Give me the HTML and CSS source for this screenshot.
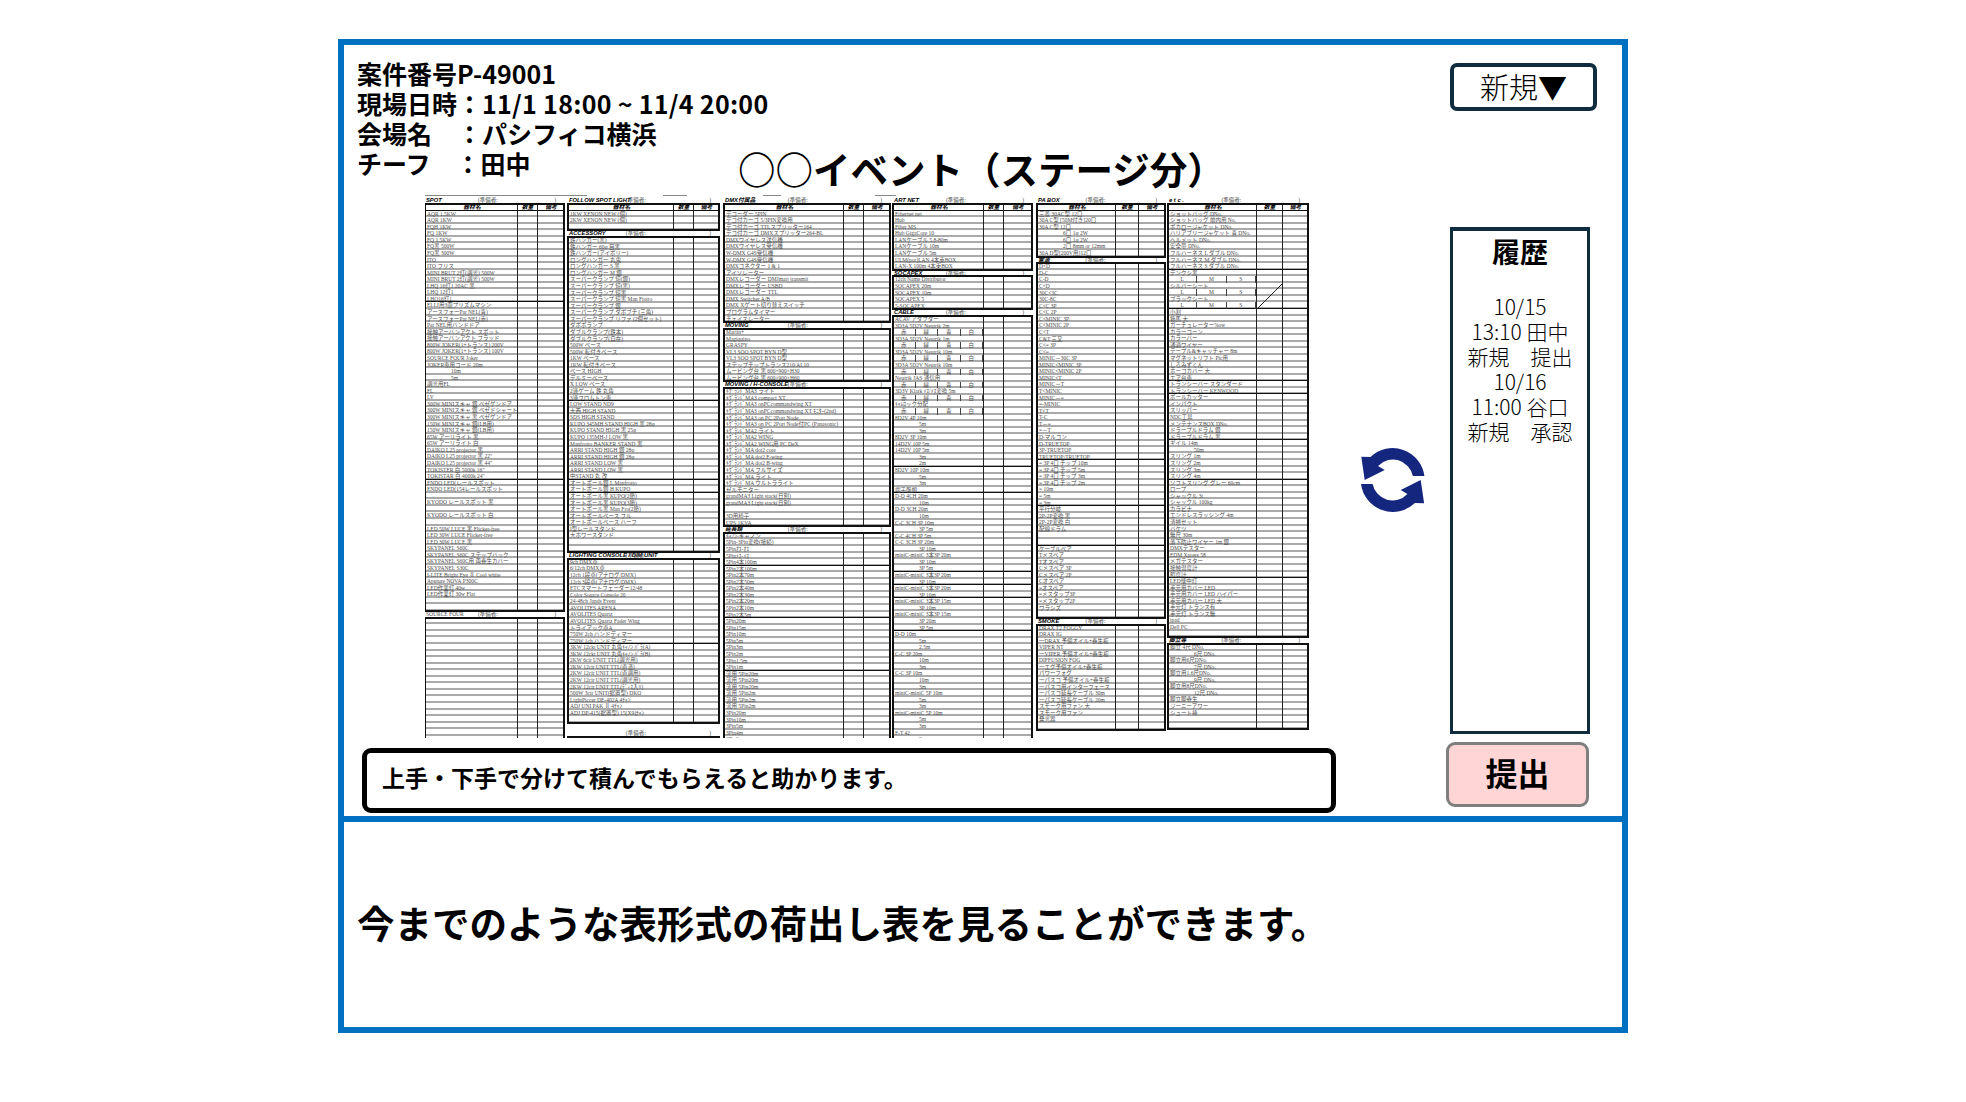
FILE: index.html
```html
<!DOCTYPE html>
<html lang="ja">
<head>
    <meta charset="UTF-8">
    <title>荷出し表</title>
    <link rel="stylesheet" href="styles.css">
</head>
<body>
    <div class="frame">
        <section class="upper">
            <div class="main">
                <div class="head">
                    <div class="info">
                        <div>案件番号P-49001</div>
                        <div>現場日時：<span class="num">11/1 18:00 ~ 11/4 20:00</span></div>
                        <div>会場名　：パシフィコ横浜</div>
                        <div>チーフ　：田中</div>
                    </div>
                    <h1 class="title">○○イベント（ステージ分）</h1>
                </div>
                <div class="sheet-rules"><i></i><i></i><i></i><i></i></div>
                <div class="sheet" id="sheet"></div>
                <div class="note">上手・下手で分けて積んでもらえると助かります。</div>
            </div>
            <div class="side">
                <button class="new-btn">新規▼</button>
                <div class="history-row">
                    <div class="sync">
                        <svg width="64" height="65" viewBox="0 0 64 65">
                            <g fill="#15267f">
                                <path d="M63.4 28A32 32 0 0 0 9.5 9L.3 8.7 3.7 32 23.7 22 17 18A20.3 20.3 0 0 1 51.8 28Z"/>
                                <path d="M63.4 28A32 32 0 0 0 9.5 9L.3 8.7 3.7 32 23.7 22 17 18A20.3 20.3 0 0 1 51.8 28Z" transform="rotate(180 31.7 32)"/>
                            </g>
                        </svg>
                    </div>
                    <div class="history">
                        <h2>履歴</h2>
                        <p>10/15<br>13:10 田中<br>新規　提出<br>10/16<br>11:00 谷口<br>新規　承認</p>
                    </div>
                </div>
                <button class="submit-btn">提出</button>
            </div>
        </section>
        <section class="lower">今までのような表形式の荷出し表を見ることができます。</section>
    </div>
    <script src="sheet.js"></script>
</body>
</html>
```

FILE: styles.css
```css
body {
    margin: 0;
    padding: 39px 338px 0;
    background-color: #fff;
    color: #000;
    font-family: "Noto Sans CJK JP", "Noto Sans", sans-serif;
}
.frame {
    width: 1290px;
    height: 994px;
    box-sizing: border-box;
    border: 6px solid #0070c0;
}
.upper {
    display: flex;
    height: 771px;
    border-bottom: 6px solid #0070c0;
}
.main {
    width: 992px;
    padding-top: 13px;
    box-sizing: border-box;
}
.head {
    display: flex;
    height: 120px;
    padding-left: 13px;
}
.info {
    width: 381px;
    font-size: 25px;
    font-weight: 700;
    line-height: 30px;
    white-space: nowrap;
}
.num {
    letter-spacing: .3px;
}
.title {
    margin: 0 0 -10px;
    align-self: flex-end;
    font-size: 37.5px;
    font-weight: 700;
    line-height: 40px;
    white-space: nowrap;
}
.sheet-rules {
    display: flex;
    height: 1px;
    margin: 17px 0 0 81px;
}
.sheet-rules i {
    height: 1px;
    background-color: #888;
    margin-right: 76px;
    width: 162px;
}
.sheet-rules i:nth-child(2) { width: 24px; }
.sheet-rules i:nth-child(3) { width: 18px; margin-right: 94px; }
.sheet-rules i:nth-child(4) { width: 21px; }
.sheet {
    display: flex;
    height: 541px;
    margin: 1px 0 0 81px;
    overflow: hidden;
}
.note {
    height: 65px;
    margin: 10px 0 0 18px;
    padding-left: 15px;
    box-sizing: border-box;
    border: 5px solid #000;
    border-radius: 9px;
    font-size: 23px;
    font-weight: 700;
    line-height: 48px;
    white-space: nowrap;
}
.side {
    flex: 1;
    padding-top: 18px;
}
.new-btn {
    display: block;
    width: 147px;
    height: 48px;
    margin-left: 114px;
    padding: 0 0 6px;
    box-sizing: border-box;
    background-color: #fff;
    border: 4px solid #0f2d3f;
    border-radius: 7px;
    color: #000;
    font-family: inherit;
    font-size: 29px;
    font-weight: 300;
    line-height: 38px;
}
.history-row {
    display: flex;
    margin-top: 116px;
}
.sync {
    display: flex;
    align-items: center;
    width: 114px;
    padding-left: 25px;
    box-sizing: border-box;
}
.history {
    width: 140px;
    height: 507px;
    box-sizing: border-box;
    border: 3px solid #0f2d3f;
    border-top-width: 4px;
    text-align: center;
}
.history h2 {
    margin: 0;
    font-size: 28px;
    font-weight: 700;
    line-height: 40px;
}
.history p {
    margin: 23px 0 0;
    font-size: 21px;
    font-weight: 300;
    line-height: 25px;
}
.submit-btn {
    display: block;
    width: 143px;
    height: 65px;
    margin: 8px 0 0 110px;
    padding: 0 0 5px;
    box-sizing: border-box;
    background-color: #ffd5d5;
    border: 3px solid #7f7f7f;
    border-radius: 9px;
    color: #000;
    font-family: inherit;
    font-size: 32px;
    font-weight: 700;
}
.lower {
    padding: 70px 0 0 13px;
    font-size: 37.5px;
    font-weight: 700;
    line-height: 60px;
    white-space: nowrap;
}

/* sheet */
.col {
    flex: none;
    font-family: "Liberation Serif", "Noto Sans CJK JP", serif;
    font-size: 5.5px;
    color: #4a4a4a;
}
.col-spot { width: 139px; margin-right: 4px; --cols: 92px 20px 27px; }
.col-follow { width: 151px; margin-right: 5px; --cols: 105px 20px 26px; }
.col-dmx { width: 166px; margin-right: 3px; --cols: 119px 20px 27px; }
.col-art { width: 139px; margin-right: 5px; --cols: 90px 20px 29px; }
.col-pa { width: 128px; margin-right: 3px; --cols: 78px 23px 27px; }
.col-etc { width: 140px; --cols: 88px 26px 26px; }
.sec-title {
    display: grid;
    grid-template-columns: 40% 1fr auto;
    height: 6.8px;
    padding: 0 8px 0 1px;
    line-height: 6.8px;
    white-space: nowrap;
}
.sec-title b {
    color: #000;
    font-family: "Liberation Sans", "Noto Sans CJK JP", sans-serif;
    font-size: 5.8px;
    font-style: italic;
}
.sec-title b.plain {
    color: inherit;
    font-family: inherit;
    font-size: inherit;
    font-style: normal;
    font-weight: 400;
}
.block {
    position: relative;
    outline: 2px solid #111;
    outline-offset: -1px;
}
.row {
    display: grid;
    grid-template-columns: var(--cols);
    height: 6.57px;
    line-height: 6px;
    white-space: nowrap;
    background: linear-gradient(#fff 68%, #aaa 68%);
}
.row.heavy {
    background: linear-gradient(#fff 68%, #aaa 68%, #aaa 84%, #111 84%);
}
.row.top {
    height: 6.8px;
    background: #fff;
    color: #000;
    font-family: "Liberation Sans", "Noto Sans CJK JP", sans-serif;
    font-size: 5.8px;
    font-style: italic;
    font-weight: 700;
    text-align: center;
    box-shadow: inset 0 -1px #111;
}
.row span {
    overflow: hidden;
    padding-left: 2px;
}
.row .cell {
    padding: 0;
    border-left: 1px solid #222;
}
.row .indent { padding-left: 26px; }
.row .parts {
    display: grid;
    grid-auto-flow: column;
    grid-auto-columns: 1fr;
    padding: 0;
}
.row .parts em {
    font-style: normal;
    text-align: center;
    border-right: 1px solid #444;
}
.slash {
    position: absolute;
    left: 88px;
    top: 80px;
}
```

FILE: sheet.js
```js
// "_" = heavy line under the row, ">" = indented, "|" = split into small boxes
const COLORS = '赤|緑|青|白';
const SIZES = 'L|M|S';

const sheetData = [
    { cls: 'col-spot', blocks: [
        { title: 'SPOT', top: true, rows: ['AQR 1.5KW', 'AQR 1KW', 'FQH 1KW', 'FQ 1KW', 'FQ 1.5KW', 'FQ黒 500W', 'FQ黒 300W', 'ITO', 'ITO フリス', 'MINI BRUT 2灯(調光) 500W', 'MINI BRUT 2灯(調光) 500W', 'LHQ 16灯1 20AC 黒', 'LHQ 12灯1', '_LHQ16灯1', 'ELLI用3面プリズムマシン', 'アースフォーPar NEL(青)', 'アースフォーPar NEL(赤)', 'Par NEL用バンドドア', '接触アーバンアクト スポット', '接触アーバンアクト フラッド', '800W JOKER(1+トランス) 200V', '800W JOKER(1+トランス) 100V', 'SOURCE FOUR Joker', 'JOKER専用コード 20m', '>10m', '>5m', '調光用FL', 'FL', 'LV', '300W MINIスキャ 銀 ベゼゲンドア', '300W MINIスキャ 銀 ベゼドシャート', '300W MINIスキャ 黒 ベゼゲンドア', '150W MINIスキャ 銀(LB用)', '150W MINIスキャ 銀(LB用)', '65W アーリライト 黒', '65W アーリライト 白', 'DAIKO L25 projector 黒', 'DAIKO L25 projector 黒 22"', 'DAIKO L25 projector 黒 44"', 'TOKISTER 白 5000k 16"', '_TOKISTAR 白 4000k 24"', 'ENDO LED(レールスポット', 'ENDO LED(154レールスポット', '', 'KYODO レールスポット 黒', '', 'KYODO レールスポット 白', '', 'LED 50W LUCE 黒 Flicker-free', 'LED 30W LUCE Flicker-free', 'LED 30W LUCE 黒', 'SKYPANEL S60C', 'SKYPANEL S60C ステップバック', 'SKYPANEL S60C用 雨養生カバー', 'SKYPANEL S30C', 'I-LITE Bright Eye Ⅱ Cool white', 'Aputure NOVA P300C', 'LED作業灯 40w', 'LED作業灯 30w Flat', '', ''] },
        { title: 'SOURCE FOUR', plain: true, rows: Array(20).fill('') }
    ] },
    { cls: 'col-follow', blocks: [
        { title: 'FOLLOW SPOT LIGHT', top: true, rows: ['1KW XENON NEW (個)', '2KW XENON NEW (個)', ''] },
        { title: 'ACCESSORY', rows: ['鉄ハンガー(黒)', '鉄ハンガー 60φ 目黒', '鉄ハンガー(アイボリー)', 'ロングハンガー 丸鬼', 'ロングハンガー S 黒', 'ロングハンガー M 銀', 'スーパークランプ 短(銀)', 'スーパークランプ 短(黒)', 'スーパークランプ 短黒', 'スーパークランプ 短黒 Man Fiotto', 'スーパークランプ 銀', 'スーパークランプ ダボブチ (三角)', 'スーパークランプ リファ (2個セット)', 'ダボポランプ', 'ダブルクランプ(鉄本)', 'ダブルクランプ(自在)', '500W ベース', '500W 転付きベース', '1KW ベース', '1KW 転付きベース', 'ベース HIGH', 'デルミーベース', 'X LOW ベース', '2連ゲーム 鉄 丸角', '_3連フロムトン車', 'LOW STAND ND9', '大西 HIGH STAND', 'SDS HIGH STAND', 'KUPO 345MH STAND HIGH 黒 28φ', 'KUPO STAND HIGH 黒 25φ', 'KUPO 135MH-J LOW 黒', 'Manfrotto BANKER STAND 黒', 'ARRI STAND HIGH 銀 28φ', 'ARRI STAND HIGH 銀 28φ', 'ARRI STAND LOW 黒', 'ARRI STAND LOW 黒', '_中STAND 丸 改', 'オートポール銀 L Manfrotto', '_オートポール銀 H KUPO', 'オートポール黒 KUPO(2節)', 'オートポール黒 KUPO(3節)', 'オートポール黒 Man Fro(2節)', 'オートポールベース フル', 'オートポールベース ハーフ', 'I型レールスタンド', '大ホワースタンド', '', ''] },
        { title: 'LIGHTING CONSOLE / DIM UNIT', rows: ['9ch DMX卓', '6/12ch DMX卓', '12ch 1段卓(アナログ/DMX)', '12ch 3段卓(アナログ/DMX)', 'ETCスマートフェーダー12/48', 'Color Source Console 20', '24-48ch Jands Event', 'AVOLITES ARENA', 'AVOLITES Quartz', 'AVOLITES Quartz Fader Wing', 'トライアック卓A', '750W 2ch ハンドディマー', '_750W 1ch ハンドディマー', '3KW 12ckt UNIT 丸角ｷｬﾉﾝ ﾊﾟﾗ(A)', '3KW 12ckt UNIT 丸角ｷｬﾉﾝ ﾊﾟﾗ(B)', '2KW 6cir UNIT TTL(調光用)', '2KW 12cir UNIT TTL(直潰)', '2KW 12cir UNIT TTL(直調用)', '2KW 12cir UNIT TTL(調光用)', '2KW 12cir UNIT TTL(ﾃﾞｨｽ入ﾘ)', '500W 3cir UNIT(据置型) DKO', 'LightPiccer DE-402A 4ﾁｬﾝ', 'ADJ UNI PAK Ⅱ 4ﾁｬﾝ', 'ADJ DP-415(据置型) 15(X9)ﾁｬﾝ', ''] },
        { gap: true, title: '', rows: ['', ''] }
    ] },
    { cls: 'col-dmx', blocks: [
        { title: 'DMX付属品', top: true, rows: ['デコーダー 5PIN', 'デコ付カーゴ 5/3PIN変換用', 'デコ付カーゴ TTLスプリッター164', 'デコ付カーゴ DMXスプリッター264-BL', 'DMXワイヤレス送信機', 'DMXワイヤレス受信機', 'W-DMX G4S受信機', 'W-DMX G4S受信機', 'DMXコネクター 1 & 1', 'アイソレーター', 'DMXレコーダー DMJmart transmit', 'DMXレコーダー USBD', 'DMXレコーダー TTL', 'DMX Switcher A/B', 'DMX Xゲート切り替えスイッチ', 'プログラムタイマー', 'チェイスレーター'] },
        { title: 'MOVING', rows: ['Martin+', 'Magiquino', 'GRASPY', 'VL3 SOO SPOT BYN D型', 'VL3 SOO SPOT BYN D型', 'ステップチップトランス210/AL10', 'ムービング台 黒 600×900×H30', 'ムービング台 黒 600×900×H60'] },
        { title: 'MOVING / H-CONSOLE', rows: ['ｷｸﾞﾗﾝﾄﾞMA3 ライト', 'ｷｸﾞﾗﾝﾄﾞMA3 compact XT', 'ｷｸﾞﾗﾝﾄﾞMA3 onPCcommandwing XT', 'ｷｸﾞﾗﾝﾄﾞMA3 onPCcommandwing XT ﾓﾆﾀｰ(2nd)', 'ｷｸﾞﾗﾝﾄﾞMA3 on PC 2Port Node', 'ｷｸﾞﾗﾝﾄﾞMA3 on PC 2Port Node付PC (Panasonic)', 'ｷｸﾞﾗﾝﾄﾞMA2 ライト', 'ｷｸﾞﾗﾝﾄﾞMA2 WING', 'ｷｸﾞﾗﾝﾄﾞMA2 WING用 PC DeX', 'ｷｸﾞﾗﾝﾄﾞMA dot2 core', 'ｷｸﾞﾗﾝﾄﾞMA dot2 F-wing', 'ｷｸﾞﾗﾝﾄﾞMA dot2 B-wing', 'ｷｸﾞﾗﾝﾄﾞMA フルサイズ', 'ｷｸﾞﾗﾝﾄﾞMA ライト', 'ｷｸﾞﾗﾝﾄﾞMA ウルトラライト', 'ゼルモニター', 'grandMA3 Light stack(日別)', 'grandMA3 Light stack(日別)', '', '3D用椅子', 'UPS 1KVA'] },
        { title: '延長類', rows: ['ｷｬﾉﾝ-キャノン', '5Pin-3Pin変換(接続)', '5Pinｵｽ-ｵｽ', '5Pinﾒｽ-ﾒｽ', '_5Pin4本100m', '5Pin2本100m', '5Pin2本70m', '5Pin2本50m', '5Pin2本40m', '5Pin2本30m', '5Pin2本20m', '5Pin2本10m', '_5Pin2本5m', '5Pin20m', '5Pin15m', '5Pin10m', '5Pin5m', '5Pin3m', '5Pin2m', '5Pin1.5m', '_5Pin1m', '流用 5Pin20m', '流用 5Pin20m', '流用 5Pin20m', '流用 5Pin2m', '流用 5Pin2m', '流用 5Pin2m', '3Pin20m', '3Pin10m', '3Pin5m', '3Pin4m', '3Pin3m'] }
    ] },
    { cls: 'col-art', blocks: [
        { title: 'ART NET', top: true, rows: ['Ethernet net', 'Hub', 'Fiber MS', 'Hub GigaCore 10', 'LANケーブル 5.8-80m', 'LANケーブル 10m', 'LANケーブル 5m', 'ULM(por)LAN 4本束BOX', 'LAN-X 100m 4本束BOX'] },
        { title: 'SOCAPEX', rows: ['12ch Name Distributor', 'SOCAPEX 20m', 'SOCAPEX 10m', 'SOCAPEX 5', '5-SOCAPEX'] },
        { title: 'CABLE', rows: ['ACAV アダプター', '3D3A 5D2V Neutrik 2m', COLORS, '3D3A 5D2V Neutrik 1m', COLORS, '3D3A 5D2V Neutrik 10m', COLORS, '3D3A 5D2V Neutrik 10m', COLORS, 'Neutrik JAS 通信用', COLORS, '3D3V Klark ﾒｽ/ﾒｽ変換 5m', COLORS, 'ｷｬﾑﾛック分配', COLORS, '8D2V 4P 10m', '>5m', '>3m', '8D2V 3P 10m', '14D2V 10P 5m', '14D2V 10P 5m', '>3m', '_>2m', '8D2V 10P 10m', '>5m', '>3m', '_端子盤類', 'D-D 4CH 20m', '>10m', 'D-D 3CH 20m', '>10m', 'C-C 3CH 3P 10m', '>3P 5m', 'C-C 4CH 3P 5m', 'C-C 3CH 3P 20m', '>3P 10m', 'miniC-miniC 3本3P 20m', '>3P 10m', '_>3P 5m', 'miniC-miniC 3本3P 20m', '_>3P 10m', 'miniC-miniC 3本3P 20m', '_>3P 10m', 'miniC-miniC 3本3P 15m', '>3P 10m', 'miniC-miniC 3本3P 15m', '>3P 20m', '_>3P 5m', 'D-D 10m', '>5m', '>2.5m', 'C-C 3P 20m', '>10m', '>3m', 'C-C 3P 10m', '>10m', '>3m', 'miniC-miniC 5P 10m', '>5m', '>3m', 'miniC-miniC 5P 10m', '>5m', '>3m', 'F-T 42', '>2m'] }
    ] },
    { cls: 'col-pa', blocks: [
        { title: 'PA BOX', top: true, rows: ['三菱 30AC型 12口', '30A C型 [50M付き]20口', '30A C型 12口', '>6口 1φ 2W', '>6口 1φ 2W', '>2口 8mm or 12mm', '30A D型[200V用]12口'] },
        { title: '電源', rows: ['D<D', 'D-C', 'C-D', 'C<D', '30C<3C', '30C-8C', 'C<C 3P', 'C<C 2P', 'C<MINIC 3P', 'C<MINIC 2P', 'C<T', 'C&T 三又', 'C<= 3P', 'C<=', 'MINIC－30C 3P', 'MINIC<MINIC 3P', 'MINIC<MINIC 2P', 'MINIC<T', 'MINIC－T', 'T<MINIC', 'MINIC－=', '=-MINIC', 'T<T', 'T-C', 'T－=', '=－T', 'D-マルコン', 'D-TRUETOP', '3P-TRUETOP', '_TRUETOP/TRUETOP', '= 3P 4口 チップ 10m', '= 3P 4口 チップ 5m', '= 3P 4口 チップ 3m', '= 3P 4口 チップ 2m', '= 10m', '= 5m', '_= 3m', '平行分岐', '2P-2P変換 黒', '2P-2P変換 白', '配線ドラム', '', '_', 'ケーブルペア', 'Tメスペア', 'Tオスペア', 'Cメスペア 3P', 'Cメスペア 2P', 'Cオスペア', '=オスペア', '=メスタップ3P', '=メスタップ2P', 'ワラシズ', ''] },
        { title: 'SMOKE', rows: ['DRAX T2 FOGGY', 'DRAX IG', '一DRAX 予備オイル+養生板', 'VIPER NT', '一VIPER 予備オイル+養生板', 'DIFFUSION FOG', '一エグ予備オイル+養生板', 'パワーフォグ', '一パスコ 予備オイル+養生板', '一パスコ用インターフェース', '一パスコ延長ケーブル 30m', '一パスコ延長ケーブル 20m', 'スモーク用ファン 大', 'スモーク用ファン', '発光器', ''] }
    ] },
    { cls: 'col-etc', blocks: [
        { title: 'e t c .', top: true, slash: true, rows: ['ショットバッグ DNo.', 'ショットバッグ 前内用 No.', 'ポカロージャケット DNo.', 'ハリアブリージャケット 青 DNo.', 'ヘルメット DNo.', '安全帯 DNo.', 'フルハーネス L ダブル DNo.', 'フルハーネス M ダブル DNo.', '_フルハーネス S ダブル DNo.', 'デンクシ黒', SIZES, 'シルバーシート', SIZES, 'ブラックシート', '_' + SIZES, '小割', '箱馬 大', 'ガーチュレーター%ow', 'カラーコーン', 'カラーバー', '通過ワイヤー', 'テープル&キャッチャー 8m', 'マグネットリフト Pic用', 'しろみずくん', 'ホーコカバー 大', '_エア台車', 'トランシーバー スタンダード', '_トランシーバー KENWOOD', 'ポールカッター', 'インパクト', 'スリッパー', 'NDC工具', 'メンテナンスBOX DNo.', 'ドラープルドラム 銀', '_ドラープルドラム 黒', 'ギイル 14m', '>50m', 'スリング 1m', 'スリング 2m', 'スリング 3m', '_スリング 4m', 'ソフトスリング グレー 60cm', 'ロープ', 'シャックル 3t', 'シャックル 100kg', 'カラビナ', 'エンドレスラッシング 4m', '清掃セット', 'バケツ', '無尺 30m', '落下防止ワイヤー 1m 銀', 'DMXテスター', 'EDM Xpress 58', 'メガテスター', '接触温度計', '_照度計', 'LED懐中灯', '手元用カバー LED', '手元用カバー LED ハイパー', '手元用カバー LED 大', '手元灯 トランス有', '手元灯 トランス無', 'ipad', 'Dell PC', ''] },
        { title: '脚立等', rows: ['脚立 4尺 DNo.', '>6尺 DNo.', '脚立用6尺DNo.', '>7尺 DNo.', '脚立用1.6尺DNo.', '>9尺 DNo.', '脚立用8尺DNo.', '>12尺 DNo.', '脚立脚養生', 'ジーニーアワー', 'シュート棒', '', ''] }
    ] }
];

function escapeText(text) {
    return text.replace(/&/g, '&amp;').replace(/</g, '&lt;');
}

function rowHtml(text) {
    let cls = 'row';
    let label = escapeText(text);
    if (label.startsWith('_')) {
        cls += ' heavy';
        label = label.slice(1);
    }
    let name = `<span>${label}</span>`;
    if (label.startsWith('>')) {
        name = `<span class="indent">${label.slice(1)}</span>`;
    } else if (label.includes('|')) {
        const parts = label.split('|').map(p => `<em>${p}</em>`).join('');
        name = `<span class="parts">${parts}</span>`;
    }
    return `<div class="${cls}">${name}<span class="cell"></span><span class="cell"></span></div>`;
}

function blockHtml(b) {
    let html = '';
    if (b.gap) html += '<div class="sec-title"></div>';
    html += `<div class="sec-title"><b class="${b.plain ? 'plain' : ''}">${b.title}</b><span>(準備者:</span><span>)</span></div>`;
    html += '<div class="block">';
    if (b.top) {
        html += '<div class="row top"><span>器材名</span><span class="cell">数量</span><span class="cell">備考</span></div>';
    }
    html += b.rows.map(rowHtml).join('');
    if (b.slash) {
        html += '<svg class="slash" width="26" height="26"><line x1="0" y1="26" x2="26" y2="0" stroke="#222"/></svg>';
    }
    return html + '</div>';
}

document.getElementById('sheet').innerHTML = sheetData.map(col =>
    `<div class="col ${col.cls}">${col.blocks.map(blockHtml).join('')}</div>`
).join('');
```
